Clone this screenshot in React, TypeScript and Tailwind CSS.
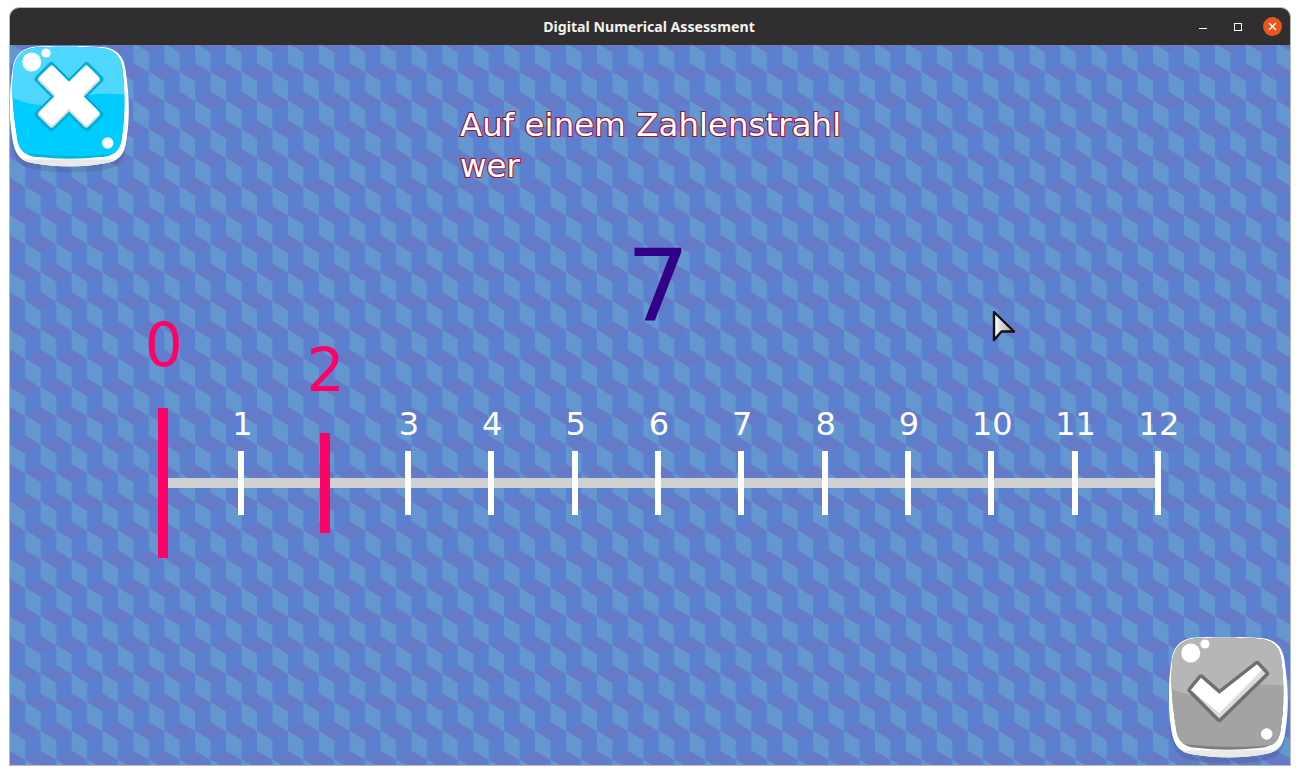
const ticks = [0, 1, 2, 3, 4, 5, 6, 7, 8, 9, 10, 11, 12];
const marked: Record<number, string> = { 0: "h-[150px]", 2: "h-[100px]" };

function Background() {
  return (
    <svg className="absolute inset-0" width="1280" height="720">
      <defs>
        <pattern id="cubes" x="30.7" y="-1.3" width="30.9" height="57.3" patternUnits="userSpaceOnUse">
          <rect width="30.9" height="57.3" fill="#5b80cf" />
          <g fill="#667bc8">
            <polygon points="-15.45,28.65 0,19.15 15.45,28.65 0,38.15" />
            <polygon points="15.45,28.65 30.9,19.15 46.35,28.65 30.9,38.15" />
            <polygon points="0,57.3 15.45,47.8 30.9,57.3 15.45,66.8" />
            <polygon points="0,0 15.45,-9.5 30.9,0 15.45,9.5" />
          </g>
          <g fill="#6497cf">
            <polygon points="0,0 15.45,9.5 15.45,28.65 0,19.15" />
            <polygon points="15.45,28.65 30.9,38.15 30.9,57.3 15.45,47.8" />
          </g>
          <g stroke="#8fbde6" strokeWidth="0.4" strokeOpacity="0.5" fill="none">
            <line x1="0" y1="0" x2="15.45" y2="9.5" />
            <line x1="15.45" y1="28.65" x2="30.9" y2="38.15" />
          </g>
        </pattern>
      </defs>
      <rect width="1280" height="720" fill="url(#cubes)" />
    </svg>
  );
}

const OUTER =
  "M26 .5C45-.5 75-.5 92 1C106 2.5 113 9 115 22C119 48 120 70 116 94C114 108 108 114 94 116C72 120 48 120 25 116C11 114 6 108 3 94C-1 70-1 48 3 22C5 9 12 2 26 .5Z";
const INNER =
  "M26 1.5C45 .5 74 .5 91 2C103 3.5 110 9 112 22C115 48 115 70 111 94C109 103 104 108 92 109.5C70 112 48 112 27 109.5C15 108 10 103 8 94C4 70 1 48 4 22C6 9 14 3 26 1.5Z";

type GlossyProps = {
  id: string;
  base: string;
  top: string;
  band: string;
  children: React.ReactNode;
};

function GlossyButton({ id, base, top, band, children }: GlossyProps) {
  return (
    <svg className="block" width="121" height="128" viewBox="0 0 121 128">
      <defs>
        <clipPath id={id}>
          <path d={INNER} />
        </clipPath>
        <clipPath id={id + "o"}>
          <path d={OUTER} />
        </clipPath>
      </defs>
      <g transform="translate(-.3 0) scale(1.005 1.012)">
        <path d={OUTER} fill="#223" opacity="0.13" transform="translate(0 6)" />
        <path d={OUTER} fill="#fff" />
        <rect x="0" y="112" width="121" height="10" fill="#e9e9e9" clipPath={`url(#${id}o)`} />
        <path d={INNER} fill={band} />
        <g clipPath={`url(#${id})`}>
          <path d="M0 0H121V105C90 110 30 110 0 103Z" fill={base} />
          <path d="M0 0H121V49C90 45 75 48 60 53C35 62 15 58 0 49Z" fill={top} />
        </g>
      </g>
      <circle cx="21.7" cy="16" r="9.5" fill="#fff" />
      <circle cx="36" cy="7" r="4.6" fill="#fff" />
      <circle cx="97.7" cy="97" r="5.8" fill="#fff" />
      {children}
    </svg>
  );
}

function CrossMark() {
  return (
    <g transform="translate(59 50.7) rotate(45)">
      <g fill="#00aed8">
        <rect x="-38" y="-13" width="76" height="26" rx="4" />
        <rect x="-13" y="-38" width="26" height="76" rx="4" />
      </g>
      <g fill="#dedede">
        <rect x="-35" y="-10.5" width="70" height="21" rx="3" />
        <rect x="-10.5" y="-35" width="21" height="70" rx="3" />
      </g>
      <g fill="#fff" transform="translate(-1.2 -1.2)">
        <rect x="-33.8" y="-9.3" width="68" height="19" rx="3" />
        <rect x="-9.3" y="-33.8" width="19" height="68" rx="3" />
      </g>
    </g>
  );
}

function CheckMark() {
  return (
    <g strokeLinejoin="round">
      <polygon
        points="22,53 32,41 50.3,57 88,27.5 96.5,36.5 50.3,81.5"
        fill="#dcdcdc"
        stroke="#6f6f6f"
        strokeWidth="7"
      />
      <polygon points="22,53 32,41 50.3,57 88,27.5 96.5,36.5 50.3,81.5" fill="#dcdcdc" />
      <polygon points="22,53 32,41 50.3,57 88,27.5 93,33 50.3,76" fill="#fff" />
    </g>
  );
}

function NumberLine() {
  return (
    <div className="relative ml-[116px] mt-[71px] flex h-[150px] items-center">
      <div className="absolute left-[42px] top-[70px] h-[10px] w-[990px] bg-[#d0d0d0]" />
      {ticks.map((n) => {
        const pink = marked[n];
        return (
          <div key={n} className={`relative flex justify-center ${n === 0 ? "w-[73.67px]" : "w-[83.33px]"}`}>
            <div className={`relative ${pink ? `w-[10px] bg-[#ff0066] ${pink}` : "h-16 w-[6px] bg-white"}`}>
              <span
                className={
                  pink
                    ? "absolute bottom-full left-[calc(50%+1px)] mb-[33px] -translate-x-1/2 text-[60px] leading-none text-[#ff0066]"
                    : "absolute bottom-full left-[calc(50%+1px)] mb-[11px] -translate-x-1/2 text-[32px] leading-none text-white"
                }
              >
                {n}
              </span>
            </div>
          </div>
        );
      })}
    </div>
  );
}

export default function App() {
  return (
    <div className="h-[775px] w-[1300px] overflow-hidden bg-white pl-[10px] pt-2 font-['DejaVu_Sans',sans-serif]">
      <div className="w-[1280px] rounded-t-[9px] shadow-[0_0_0_1px_#b9b9b9]">
        <header className="grid h-[37px] grid-cols-[1fr_auto_1fr] items-center rounded-t-[9px] bg-[#302e2e]">
          <div />
          <h1 className="pr-[2px] font-['Noto_Sans',sans-serif] text-[14.15px] font-bold text-[#f2f2f2]">
            Digital Numerical Assessment
          </h1>
          <div className="flex items-center justify-end pr-[8px]">
            <div className="mt-[4px] h-px w-2 bg-white" />
            <div className="ml-[27px] h-2 w-2 border border-white" />
            <div className="ml-[21px] flex h-[19px] w-[19px] items-center justify-center rounded-full bg-[#e95420]">
              <svg width="9" height="9" viewBox="0 0 9 9">
                <path d="M1 1L8 8M8 1L1 8" stroke="#fff" strokeWidth="1.4" />
              </svg>
            </div>
          </div>
        </header>

        <main className="relative flex h-[720px] flex-col overflow-hidden">
          <Background />
          <div className="relative flex h-[140px] items-start">
            <div className="mt-px">
              <GlossyButton id="quit" base="#00ccff" top="#4fd8ff" band="#00b4e0">
                <CrossMark />
              </GlossyButton>
            </div>
            <p className="ml-[329px] mt-[60px] w-[400px] text-[32.5px] leading-[41px] text-white [-webkit-text-stroke:2.2px_#a01030] [paint-order:stroke_fill]">
              Auf einem Zahlenstrahl wer
            </p>
          </div>

          <div className="relative ml-[16px] mt-[52px] text-center text-[100px] leading-none text-[#330088]">7</div>

          <NumberLine />

          <div className="relative mt-[79px] flex justify-end">
            <GlossyButton id="done" base="#a3a3a3" top="#b6b6b6" band="#7e7e7e">
              <CheckMark />
            </GlossyButton>
          </div>

          <svg className="absolute left-[982px] top-[264px]" width="26" height="34" viewBox="0 0 26 34">
            <defs>
              <linearGradient id="arrow" x1="0" y1="0" x2="1" y2="0">
                <stop offset="0" stopColor="#fff" />
                <stop offset="1" stopColor="#9a9a9a" />
              </linearGradient>
            </defs>
            <path d="M2 3L2 31L9.5 22.5L22 22.5Z" fill="url(#arrow)" stroke="#111" strokeWidth="2.4" strokeLinejoin="round" />
          </svg>
        </main>
      </div>
    </div>
  );
}
